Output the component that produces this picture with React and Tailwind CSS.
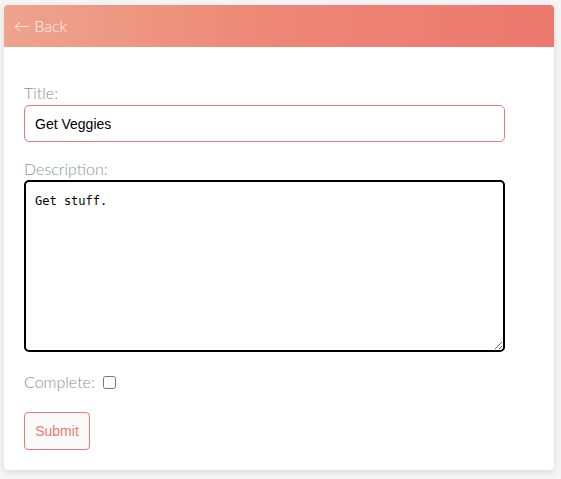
import React from "react";

export default function App() {
  return (
    <div className="min-h-[479px] w-full bg-[#f5f5f5] pt-[5px] px-[4px] pb-[9px]" style={{ fontFamily: "Lato, 'Noto Sans', sans-serif" }}>
      <div className="w-[550px] rounded-[4px] bg-white shadow-[0_2px_6px_rgba(0,0,0,0.12)]">
        <div className="flex h-[42px] items-center rounded-t-[4px] bg-gradient-to-r from-[#eea38d] via-[#ed8676] to-[#ec796d] px-[10px]">
          <span className="text-[16px] font-light text-[#fdf3ec]">← Back</span>
        </div>
        <div className="px-[20px] pt-[36px] pb-[20px]">
          <label className="block text-[16px] font-light leading-[20px] text-[#a08888]">Title:</label>
          <input
            defaultValue="Get Veggies"
            className="mt-[2px] block h-[37px] w-[481px] rounded-[5px] border border-[#ec7a6e] bg-white px-[10px] text-[14px] text-black outline-none"
            style={{ fontFamily: "'Liberation Sans', Arial, sans-serif" }}
          />
          <label className="mt-[17px] block text-[16px] font-light leading-[20px] text-[#8e939b]">Description:</label>
          <textarea
            defaultValue="Get stuff."
            className="mt-[1px] block h-[172px] w-[481px] rounded-[5px] border-2 border-black bg-white px-[9px] py-[10px] text-[12px] text-black outline-none"
            style={{ fontFamily: "'DejaVu Sans Mono', monospace" }}
          />
          <div className="mt-[20px] flex items-center gap-[8px]">
            <span className="text-[16px] font-light leading-[20px] text-[#8f8f8f]">Complete:</span>
            <input type="checkbox" className="h-[13px] w-[13px]" />
          </div>
          <button
            className="mt-[20px] block h-[38px] w-[66px] rounded-[4px] border border-[#ec7a6e] bg-[#fafafa] text-[14px] text-[#ec7a6e]"
            style={{ fontFamily: "'Liberation Sans', Arial, sans-serif" }}
          >
            Submit
          </button>
        </div>
      </div>
    </div>
  );
}
